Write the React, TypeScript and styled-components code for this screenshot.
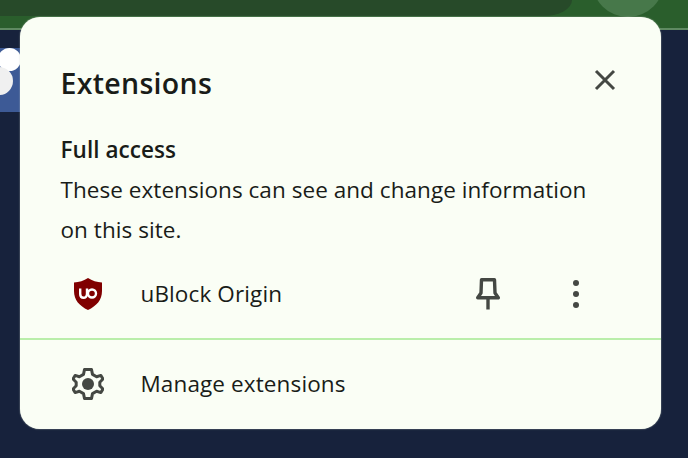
import styled, { createGlobalStyle } from "styled-components";

const GlobalStyle = createGlobalStyle`
  html, body {
    margin: 0;
    padding: 0;
    background: #17223c;
  }
`;

const Page = styled.div`
  position: relative;
  width: 688px;
  height: 458px;
  overflow: hidden;
  background: #17223c;
  font-family: "Open Sans", "Noto Sans", sans-serif;
`;

const Toolbar = styled.div`
  display: flex;
  justify-content: space-between;
  height: 28px;
  background: #2a5e2c;
  border-bottom: 2px solid #5f8a62;
`;

const Omnibox = styled.div`
  width: 572px;
  height: 16px;
  background: #274a29;
  border-radius: 0 0 28px 0 / 0 0 16px 0;
`;

const Avatar = styled.div`
  width: 72px;
  height: 72px;
  margin: -55px 24px 0 0;
  border-radius: 50%;
  background: #47784a;
`;

const SideThumb = styled.div`
  position: relative;
  width: 24px;
  height: 64px;
  margin-top: 18px;
  background: #3d5a96;
  overflow: hidden;
`;

const Blob = styled.div<{ $top: number; $size: number; $left: number; $color: string }>`
  position: absolute;
  top: ${(p) => p.$top}px;
  left: ${(p) => p.$left}px;
  width: ${(p) => p.$size}px;
  height: ${(p) => p.$size}px;
  border-radius: 50%;
  background: ${(p) => p.$color};
`;

const Popup = styled.div`
  position: absolute;
  left: 19.5px;
  top: 17px;
  width: 641.5px;
  height: 412px;
  box-sizing: border-box;
  display: flex;
  flex-direction: column;
  background: #fafef5;
  border-radius: 20px;
  box-shadow: 0 0 1.5px rgba(200, 210, 200, 0.9);
  color: #191c18;
`;

const Header = styled.div`
  display: flex;
  align-items: center;
  justify-content: space-between;
  height: 40px;
  margin: 46px 45px 0 41px;
`;

const Title = styled.h1`
  margin: 0;
  font-size: 28.5px;
  font-weight: 600;
  letter-spacing: 0.3px;
  line-height: 40px;
`;

const CloseButton = styled.button`
  display: flex;
  padding: 0;
  border: 0;
  background: none;
  margin-top: -6px;
`;

const Section = styled.section`
  margin: 27px 41px 0;
`;

const SectionTitle = styled.h2`
  margin: 0;
  font-size: 22.5px;
  font-weight: 600;
  line-height: 40px;
  letter-spacing: 0.05px;
`;

const Description = styled.p`
  margin: 0;
  width: 540px;
  font-size: 22.5px;
  line-height: 40px;
  letter-spacing: 0.05px;
`;

const Row = styled.div<{ $divider?: boolean }>`
  display: flex;
  align-items: center;
  height: ${(p) => (p.$divider ? 90 : 88)}px;
  padding: 0 82px 0 48.5px;
  box-sizing: border-box;
  border-top: ${(p) => (p.$divider ? "2px solid #b9eeaa" : "0")};
`;

const RowIcon = styled.div`
  display: flex;
  justify-content: center;
  width: 40px;
  margin-right: 32.500px;
`;

const RowLabel = styled.span`
  flex: 1;
  font-size: 22.5px;
  letter-spacing: 0.12px;
  margin-top: -2px;
`;

const RowAction = styled.button<{ $gap?: number }>`
  display: flex;
  padding: 0;
  border: 0;
  background: none;
  margin-left: ${(p) => p.$gap ?? 0}px;
`;

const Dots = styled.div`
  display: flex;
  flex-direction: column;
  gap: 5px;
  span {
    width: 6px;
    height: 6px;
    border-radius: 50%;
    background: #444843;
  }
`;

function UBlockIcon() {
  return (
    <svg width="28" height="32" viewBox="0 0 28 32">
      <path
        d="M14 0 C18 2.8 23 4.2 28 4.5 V13 C28 22 22.5 28 14 32 C5.500 28 0 22 0 13 V4.500 C5 4.200 10 2.800 14 0 Z"
        fill="#800000"
      />
      <path
        d="M6.200 10.500 V16 C6.200 21 13 21 13 16 V10.500"
        fill="none"
        stroke="#fff"
        strokeWidth="2.4"
      />
      <circle cx="18" cy="15.500" r="4" fill="none" stroke="#fff" strokeWidth="2.4" />
    </svg>
  );
}

function PinIcon() {
  return (
    <svg width="24" height="32" viewBox="0 0 24 32" fill="none" stroke="#444843" strokeWidth="3.4">
      <path d="M5.500 1.700 H18.500 L19 15 L22.300 19.800 H1.700 L5 15 Z" strokeLinejoin="round" />
      <path d="M12 20 V31.500" />
    </svg>
  );
}

function GearIcon() {
  return (
    <svg width="32" height="32" viewBox="0 0 32 32" fill="#444843">
      <path
        d="M12.500 1.500 H19.500 L20.500 6.400 L24.600 8.700 L28.900 7.400 L31 11 L27.800 14.200 V17.800 L31 21 L28.900 24.600 L24.600 23.300 L20.500 25.600 L19.500 30.500 H12.500 L11.500 25.600 L7.400 23.300 L3.100 24.600 L1 21 L4.200 17.800 V14.200 L1 11 L3.100 7.400 L7.400 8.700 L11.500 6.400 Z"
        fill="none"
        stroke="#444843"
        strokeWidth="3"
        strokeLinejoin="round"
      />
      <circle cx="16" cy="16" r="6" />
    </svg>
  );
}

export default function App() {
  return (
    <>
      <GlobalStyle />
      <Page>
        <Toolbar>
          <Omnibox />
          <Avatar />
        </Toolbar>
        <SideThumb>
          <Blob $top={0} $left={-2} $size={23} $color="#ffffff" />
          <Blob $top={19} $left={-15} $size={28} $color="#f0f0f0" />
        </SideThumb>
        <Popup>
          <Header>
            <Title>Extensions</Title>
            <CloseButton aria-label="Close">
              <svg width="22" height="22" viewBox="0 0 22 22" stroke="#444843" strokeWidth="3">
                <path d="M2 2 L20 20 M20 2 L2 20" />
              </svg>
            </CloseButton>
          </Header>
          <Section>
            <SectionTitle>Full access</SectionTitle>
            <Description>
              These extensions can see and change information on this site.
            </Description>
          </Section>
          <Row>
            <RowIcon>
              <UBlockIcon />
            </RowIcon>
            <RowLabel>uBlock Origin</RowLabel>
            <RowAction aria-label="Pin">
              <PinIcon />
            </RowAction>
            <RowAction aria-label="More" $gap={73}>
              <Dots>
                <span />
                <span />
                <span />
              </Dots>
            </RowAction>
          </Row>
          <Row $divider>
            <RowIcon>
              <GearIcon />
            </RowIcon>
            <RowLabel>Manage extensions</RowLabel>
          </Row>
        </Popup>
      </Page>
    </>
  );
}
